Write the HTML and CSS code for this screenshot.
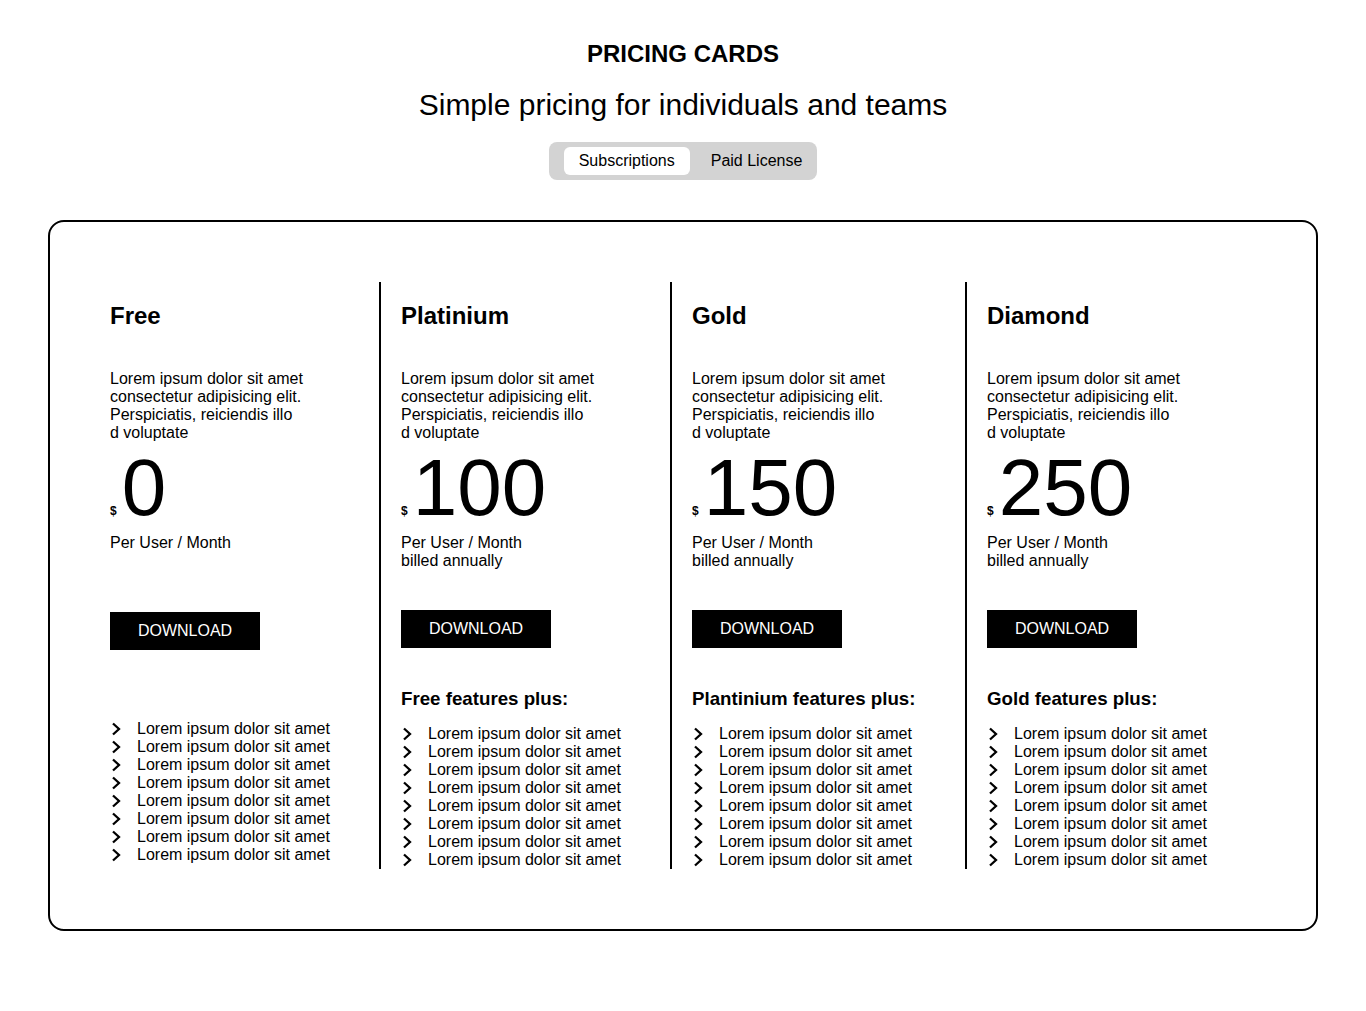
FILE: index.html
```html
<!DOCTYPE html>
<html lang="en">
<head>
<meta charset="utf-8">
<title>Pricing Cards</title>
<link rel="stylesheet" href="styles.css">
</head>
<body>
<header class="intro">
  <h1 class="intro-title">PRICING CARDS</h1>
  <p class="intro-sub">Simple pricing for individuals and teams</p>
  <div class="toggle">
    <button class="toggle-btn toggle-btn--active" type="button">Subscriptions</button>
    <button class="toggle-btn toggle-btn--plain" type="button">Paid License</button>
  </div>
</header>

<main class="board">
  <section class="plan plan--free">
    <h2 class="plan-name">Free</h2>
    <p class="plan-desc">Lorem ipsum dolor sit amet<br>consectetur adipisicing elit.<br>Perspiciatis, reiciendis illo<br>d voluptate</p>
    <div class="price"><span class="price-cur">$</span><span class="price-amt">0</span></div>
    <p class="plan-period">Per User / Month</p>
    <button class="download" type="button">DOWNLOAD</button>
    <ul class="features">
      <li class="feature"><svg class="chev" viewBox="0 0 16 18" width="16" height="18"><polyline points="3,3.5 9,9 3,14.5"/></svg><span>Lorem ipsum dolor sit amet</span></li>
      <li class="feature"><svg class="chev" viewBox="0 0 16 18" width="16" height="18"><polyline points="3,3.5 9,9 3,14.5"/></svg><span>Lorem ipsum dolor sit amet</span></li>
      <li class="feature"><svg class="chev" viewBox="0 0 16 18" width="16" height="18"><polyline points="3,3.5 9,9 3,14.5"/></svg><span>Lorem ipsum dolor sit amet</span></li>
      <li class="feature"><svg class="chev" viewBox="0 0 16 18" width="16" height="18"><polyline points="3,3.5 9,9 3,14.5"/></svg><span>Lorem ipsum dolor sit amet</span></li>
      <li class="feature"><svg class="chev" viewBox="0 0 16 18" width="16" height="18"><polyline points="3,3.5 9,9 3,14.5"/></svg><span>Lorem ipsum dolor sit amet</span></li>
      <li class="feature"><svg class="chev" viewBox="0 0 16 18" width="16" height="18"><polyline points="3,3.5 9,9 3,14.5"/></svg><span>Lorem ipsum dolor sit amet</span></li>
      <li class="feature"><svg class="chev" viewBox="0 0 16 18" width="16" height="18"><polyline points="3,3.5 9,9 3,14.5"/></svg><span>Lorem ipsum dolor sit amet</span></li>
      <li class="feature"><svg class="chev" viewBox="0 0 16 18" width="16" height="18"><polyline points="3,3.5 9,9 3,14.5"/></svg><span>Lorem ipsum dolor sit amet</span></li>
    </ul>
  </section>

  <section class="plan plan--paid">
    <h2 class="plan-name">Platinium</h2>
    <p class="plan-desc">Lorem ipsum dolor sit amet<br>consectetur adipisicing elit.<br>Perspiciatis, reiciendis illo<br>d voluptate</p>
    <div class="price"><span class="price-cur">$</span><span class="price-amt">100</span></div>
    <p class="plan-period">Per User / Month<br>billed annually</p>
    <button class="download" type="button">DOWNLOAD</button>
    <h3 class="features-title">Free features plus:</h3>
    <ul class="features">
      <li class="feature"><svg class="chev" viewBox="0 0 16 18" width="16" height="18"><polyline points="3,3.5 9,9 3,14.5"/></svg><span>Lorem ipsum dolor sit amet</span></li>
      <li class="feature"><svg class="chev" viewBox="0 0 16 18" width="16" height="18"><polyline points="3,3.5 9,9 3,14.5"/></svg><span>Lorem ipsum dolor sit amet</span></li>
      <li class="feature"><svg class="chev" viewBox="0 0 16 18" width="16" height="18"><polyline points="3,3.5 9,9 3,14.5"/></svg><span>Lorem ipsum dolor sit amet</span></li>
      <li class="feature"><svg class="chev" viewBox="0 0 16 18" width="16" height="18"><polyline points="3,3.5 9,9 3,14.5"/></svg><span>Lorem ipsum dolor sit amet</span></li>
      <li class="feature"><svg class="chev" viewBox="0 0 16 18" width="16" height="18"><polyline points="3,3.5 9,9 3,14.5"/></svg><span>Lorem ipsum dolor sit amet</span></li>
      <li class="feature"><svg class="chev" viewBox="0 0 16 18" width="16" height="18"><polyline points="3,3.5 9,9 3,14.5"/></svg><span>Lorem ipsum dolor sit amet</span></li>
      <li class="feature"><svg class="chev" viewBox="0 0 16 18" width="16" height="18"><polyline points="3,3.5 9,9 3,14.5"/></svg><span>Lorem ipsum dolor sit amet</span></li>
      <li class="feature"><svg class="chev" viewBox="0 0 16 18" width="16" height="18"><polyline points="3,3.5 9,9 3,14.5"/></svg><span>Lorem ipsum dolor sit amet</span></li>
    </ul>
  </section>

  <section class="plan plan--paid">
    <h2 class="plan-name">Gold</h2>
    <p class="plan-desc">Lorem ipsum dolor sit amet<br>consectetur adipisicing elit.<br>Perspiciatis, reiciendis illo<br>d voluptate</p>
    <div class="price"><span class="price-cur">$</span><span class="price-amt">150</span></div>
    <p class="plan-period">Per User / Month<br>billed annually</p>
    <button class="download" type="button">DOWNLOAD</button>
    <h3 class="features-title">Plantinium features plus:</h3>
    <ul class="features">
      <li class="feature"><svg class="chev" viewBox="0 0 16 18" width="16" height="18"><polyline points="3,3.5 9,9 3,14.5"/></svg><span>Lorem ipsum dolor sit amet</span></li>
      <li class="feature"><svg class="chev" viewBox="0 0 16 18" width="16" height="18"><polyline points="3,3.5 9,9 3,14.5"/></svg><span>Lorem ipsum dolor sit amet</span></li>
      <li class="feature"><svg class="chev" viewBox="0 0 16 18" width="16" height="18"><polyline points="3,3.5 9,9 3,14.5"/></svg><span>Lorem ipsum dolor sit amet</span></li>
      <li class="feature"><svg class="chev" viewBox="0 0 16 18" width="16" height="18"><polyline points="3,3.5 9,9 3,14.5"/></svg><span>Lorem ipsum dolor sit amet</span></li>
      <li class="feature"><svg class="chev" viewBox="0 0 16 18" width="16" height="18"><polyline points="3,3.5 9,9 3,14.5"/></svg><span>Lorem ipsum dolor sit amet</span></li>
      <li class="feature"><svg class="chev" viewBox="0 0 16 18" width="16" height="18"><polyline points="3,3.5 9,9 3,14.5"/></svg><span>Lorem ipsum dolor sit amet</span></li>
      <li class="feature"><svg class="chev" viewBox="0 0 16 18" width="16" height="18"><polyline points="3,3.5 9,9 3,14.5"/></svg><span>Lorem ipsum dolor sit amet</span></li>
      <li class="feature"><svg class="chev" viewBox="0 0 16 18" width="16" height="18"><polyline points="3,3.5 9,9 3,14.5"/></svg><span>Lorem ipsum dolor sit amet</span></li>
    </ul>
  </section>

  <section class="plan plan--paid">
    <h2 class="plan-name">Diamond</h2>
    <p class="plan-desc">Lorem ipsum dolor sit amet<br>consectetur adipisicing elit.<br>Perspiciatis, reiciendis illo<br>d voluptate</p>
    <div class="price"><span class="price-cur">$</span><span class="price-amt">250</span></div>
    <p class="plan-period">Per User / Month<br>billed annually</p>
    <button class="download" type="button">DOWNLOAD</button>
    <h3 class="features-title">Gold features plus:</h3>
    <ul class="features">
      <li class="feature"><svg class="chev" viewBox="0 0 16 18" width="16" height="18"><polyline points="3,3.5 9,9 3,14.5"/></svg><span>Lorem ipsum dolor sit amet</span></li>
      <li class="feature"><svg class="chev" viewBox="0 0 16 18" width="16" height="18"><polyline points="3,3.5 9,9 3,14.5"/></svg><span>Lorem ipsum dolor sit amet</span></li>
      <li class="feature"><svg class="chev" viewBox="0 0 16 18" width="16" height="18"><polyline points="3,3.5 9,9 3,14.5"/></svg><span>Lorem ipsum dolor sit amet</span></li>
      <li class="feature"><svg class="chev" viewBox="0 0 16 18" width="16" height="18"><polyline points="3,3.5 9,9 3,14.5"/></svg><span>Lorem ipsum dolor sit amet</span></li>
      <li class="feature"><svg class="chev" viewBox="0 0 16 18" width="16" height="18"><polyline points="3,3.5 9,9 3,14.5"/></svg><span>Lorem ipsum dolor sit amet</span></li>
      <li class="feature"><svg class="chev" viewBox="0 0 16 18" width="16" height="18"><polyline points="3,3.5 9,9 3,14.5"/></svg><span>Lorem ipsum dolor sit amet</span></li>
      <li class="feature"><svg class="chev" viewBox="0 0 16 18" width="16" height="18"><polyline points="3,3.5 9,9 3,14.5"/></svg><span>Lorem ipsum dolor sit amet</span></li>
      <li class="feature"><svg class="chev" viewBox="0 0 16 18" width="16" height="18"><polyline points="3,3.5 9,9 3,14.5"/></svg><span>Lorem ipsum dolor sit amet</span></li>
    </ul>
  </section>
</main>
</body>
</html>
```

FILE: styles.css
```css
* {
  box-sizing: border-box;
}

body {
  margin: 0;
  background: #ffffff;
  color: #000000;
  font-family: "Liberation Sans", Arial, sans-serif;
  font-size: 16px;
}

.intro {
  display: flex;
  flex-direction: column;
  align-items: center;
  padding-top: 40px;
}

.intro-title {
  margin: 0;
  font-size: 24px;
  line-height: 28px;
  font-weight: 700;
}

.intro-sub {
  margin: 20px 0 0;
  font-size: 30px;
  line-height: 34px;
  font-weight: 400;
}

.toggle {
  display: flex;
  align-items: center;
  margin-top: 20px;
  padding: 5px 15px;
  background: #d3d3d3;
  border-radius: 8px;
}

.toggle-btn {
  border: 0;
  background: transparent;
  font-family: inherit;
  font-size: 16px;
  color: #000;
  height: 28px;
  line-height: 28px;
  padding: 0;
  cursor: pointer;
}

.toggle-btn--active {
  background: #ffffff;
  border-radius: 6px;
  padding: 0 15px;
}

.toggle-btn--plain {
  margin-left: 21px;
}

.board {
  display: grid;
  grid-template-columns: 269px 291px 295px 291px;
  margin: 40px 48px 0;
  padding: 60px;
  border: 2px solid #000;
  border-radius: 16px;
}

.plan {
  display: flex;
  flex-direction: column;
  align-items: flex-start;
}

.plan--paid {
  border-left: 2px solid #000;
  padding-left: 20px;
}

.plan-name {
  margin: 20px 0 0;
  font-size: 24px;
  line-height: 28px;
  font-weight: 700;
}

.plan-desc {
  margin: 40px 0 0;
  line-height: 18px;
}

.price {
  display: flex;
  align-items: baseline;
  margin-top: 6px;
}

.price-cur {
  font-size: 12px;
  line-height: 12px;
  font-weight: 700;
  margin-right: 5px;
}

.price-amt {
  font-size: 80px;
  line-height: 80px;
}

.plan-period {
  margin: 6px 0 0;
  line-height: 18px;
}

.download {
  width: 150px;
  height: 38px;
  margin-top: 40px;
  border: 0;
  background: #000;
  color: #fff;
  font-family: inherit;
  font-size: 16px;
  cursor: pointer;
}

.plan--free .download {
  margin-top: 60px;
}

.features-title {
  margin: 40px 0 0;
  font-size: 18.72px;
  line-height: 22px;
  font-weight: 700;
}

.features {
  list-style: none;
  margin: 15px 0 0;
  padding: 0;
}

.plan--free .features {
  margin-top: 70px;
}

.feature {
  display: flex;
  align-items: center;
  line-height: 18px;
}

.chev {
  flex: none;
  margin-right: 11px;
  fill: none;
  stroke: #000;
  stroke-width: 2.3;
}
```
